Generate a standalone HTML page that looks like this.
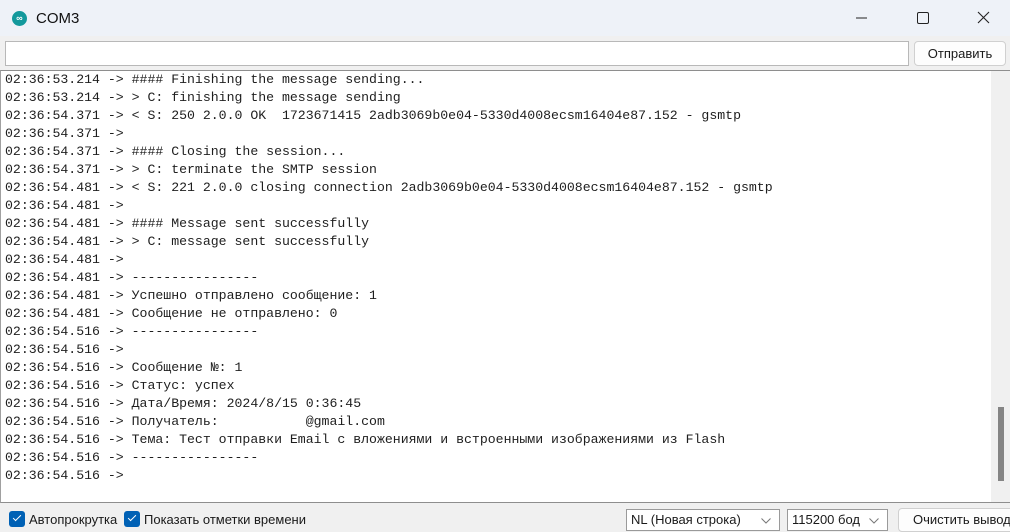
<!DOCTYPE html>
<html><head><meta charset="utf-8"><style>
*{margin:0;padding:0;box-sizing:border-box}
body{width:1010px;height:532px;overflow:hidden;background:#f0f0f0;font-family:"Segoe UI","Liberation Sans",sans-serif;position:relative}
.title{position:absolute;left:0;top:0;width:1010px;height:36px;background:#eef2f8}
.title .logo{position:absolute;left:12px;top:11px;width:15px;height:15px;border-radius:50%;background:#13999c;color:#fff;font-size:9px;line-height:15px;text-align:center;font-weight:bold}
.title .t{position:absolute;left:36px;top:10px;font-size:15px;color:#111}
.inp{position:absolute;left:5px;top:41px;width:904px;height:25px;background:#fff;border:1px solid #b8b8b8}
.btn{position:absolute;background:#fdfdfd;border:1px solid #d0d0d0;border-radius:4px;font-size:13px;color:#1a1a1a;text-align:center}
.out{position:absolute;left:0;top:70px;width:1010px;height:433px;background:#fff;border-top:1px solid #8e8e8e;border-left:1px solid #a0a0a0;border-bottom:1px solid #8e8e8e}
.txt{position:absolute;left:4px;top:0;font-family:"Liberation Mono",monospace;font-size:13.2px;line-height:18px;color:#1e1e1e;white-space:pre}
.sb{position:absolute;right:0;top:0;width:19px;height:431px;background:#f0f0f0}
.thumb{position:absolute;left:7px;top:336px;width:6px;height:74px;background:#858585}
.bot{position:absolute;left:0;top:503px;width:1010px;height:29px;background:#f0f0f0;font-size:13px;color:#1a1a1a}
.cb{position:absolute;top:8px;width:16px;height:16px;background:#0061b5;border-radius:3px}
.cb:after{content:"";position:absolute;left:4px;top:4px;width:7px;height:3px;border-left:1.3px solid #fff;border-bottom:1.3px solid #fff;transform:rotate(-45deg)}
.lbl{position:absolute;top:9px}
.dd{position:absolute;top:6px;height:22px;background:#fff;border:1px solid #9a9a9a;padding:2px 4px;font-size:13px}
.dd svg{position:absolute;right:8px;top:8px}
</style></head><body>
<div class="title"><div class="logo">∞</div><div class="t">COM3</div>
<svg style="position:absolute;left:850px;top:10px" width="160" height="16"><line x1="6" y1="8" x2="17" y2="8" stroke="#222" stroke-width="1"/><rect x="67.5" y="2.5" width="11" height="11" rx="1.5" fill="none" stroke="#222"/><path d="M128 2L139 13M139 2L128 13" stroke="#222" stroke-width="1.1"/></svg></div>
<div class="inp"></div>
<div class="btn" style="left:914px;top:41px;width:92px;height:25px;line-height:23px">Отправить</div>
<div class="out"><div class="txt">02:36:53.214 -> #### Finishing the message sending...
02:36:53.214 -> > C: finishing the message sending
02:36:54.371 -> < S: 250 2.0.0 OK  1723671415 2adb3069b0e04-5330d4008ecsm16404e87.152 - gsmtp
02:36:54.371 -> 
02:36:54.371 -> #### Closing the session...
02:36:54.371 -> > C: terminate the SMTP session
02:36:54.481 -> < S: 221 2.0.0 closing connection 2adb3069b0e04-5330d4008ecsm16404e87.152 - gsmtp
02:36:54.481 -> 
02:36:54.481 -> #### Message sent successfully
02:36:54.481 -> > C: message sent successfully
02:36:54.481 -> 
02:36:54.481 -> ----------------
02:36:54.481 -> Успешно отправлено сообщение: 1
02:36:54.481 -> Сообщение не отправлено: 0
02:36:54.516 -> ----------------
02:36:54.516 -> 
02:36:54.516 -> Сообщение №: 1
02:36:54.516 -> Статус: успех
02:36:54.516 -> Дата/Время: 2024/8/15 0:36:45
02:36:54.516 -> Получатель:           @gmail.com
02:36:54.516 -> Тема: Тест отправки Email с вложениями и встроенными изображениями из Flash
02:36:54.516 -> ----------------
02:36:54.516 -> </div>
<div class="sb"><div class="thumb"></div></div></div>
<div class="bot">
<div class="cb" style="left:9px"></div><div class="lbl" style="left:29px">Автопрокрутка</div>
<div class="cb" style="left:124px"></div><div class="lbl" style="left:144px">Показать отметки времени</div>
<div class="dd" style="left:626px;width:154px">NL (Новая строка)<svg width="10" height="6"><path d="M0.5 0.5L5 5L9.5 0.5" fill="none" stroke="#777"/></svg></div>
<div class="dd" style="left:787px;width:101px">115200 бод<svg width="10" height="6"><path d="M0.5 0.5L5 5L9.5 0.5" fill="none" stroke="#777"/></svg></div>
<div class="btn" style="left:898px;top:5px;width:120px;height:24px;line-height:22px;text-align:left;padding-left:14px">Очистить вывод</div>
</div>
</body></html>
